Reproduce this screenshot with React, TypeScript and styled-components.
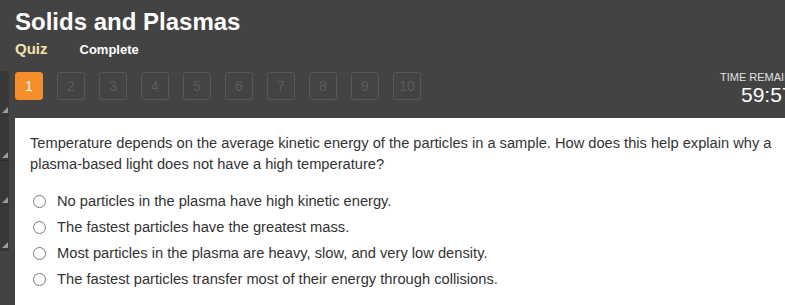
import React from "react";
import styled, { createGlobalStyle } from "styled-components";

const Global = createGlobalStyle`
  html, body { margin: 0; padding: 0; background: #434343; overflow: hidden; }
  body { font-family: "Liberation Sans", Arial, sans-serif; }
`;

const Page = styled.div`
  width: 785px;
  height: 305px;
  background: #434343;
  position: relative;
  overflow: hidden;
`;

const Header = styled.div`
  padding: 8px 0 0 15px;
`;

const Title = styled.h1`
  margin: 0;
  font-size: 24px;
  line-height: 27px;
  font-weight: bold;
  color: #ffffff;
`;

const SubRow = styled.div`
  display: flex;
  align-items: baseline;
  gap: 32px;
  margin-top: 5px;
  height: 22px;
`;

const Quiz = styled.span`
  font-size: 15px;
  font-weight: bold;
  color: #f3e3b0;
`;

const Status = styled.span`
  font-size: 13px;
  font-weight: bold;
  color: #ffffff;
`;

const NavRow = styled.div`
  display: flex;
  align-items: flex-start;
  margin-top: 10px;
  height: 46px;
`;

const Pager = styled.div`
  display: flex;
  gap: 14px;
`;

const PageBtn = styled.div<{ $active?: boolean }>`
  box-sizing: border-box;
  width: 28px;
  height: 28px;
  border-radius: 3px;
  display: flex;
  align-items: center;
  justify-content: center;
  font-size: 14px;
  color: ${(p) => (p.$active ? "#ffffff" : "#5c5c5c")};
  background: ${(p) => (p.$active ? "#f58f2a" : "transparent")};
  border: 1px solid ${(p) => (p.$active ? "#f58f2a" : "#585858")};
`;

const Timer = styled.div`
  margin-left: auto;
  margin-right: -35px;
  width: 100px;
  flex-shrink: 0;
  display: flex;
  flex-direction: column;
  align-items: flex-start;
  color: #ffffff;
`;

const TimerLabel = styled.div`
  font-size: 11px;
  color: #e0e0e0;
  line-height: 12px;
  margin-top: -1px;
  white-space: nowrap;
`;

const TimerValue = styled.div`
  font-size: 21px;
  line-height: 22px;
  margin-top: 1px;
  padding-left: 21px;
  color: #ffffff;
`;

const Panel = styled.div`
  margin-left: 15px;
  background: #ffffff;
  padding: 15px 8px 0 15px;
  height: 200px;
`;

const Question = styled.p`
  margin: 0 0 16px 0;
  font-size: 14.65px;
  line-height: 21px;
  color: #333333;
`;

const Options = styled.div`
  display: flex;
  flex-direction: column;
  gap: 6px;
`;

const Option = styled.label`
  display: flex;
  align-items: center;
  height: 20px;
  font-size: 14.7px;
  color: #333333;
`;

const Radio = styled.span`
  box-sizing: border-box;
  width: 13px;
  height: 13px;
  border-radius: 50%;
  border: 1px solid #7a7a7a;
  background: #fff;
  margin: 0 11px 0 3px;
  flex-shrink: 0;
`;

const SideStrip = styled.div`
  position: absolute;
  left: 0;
  top: 71px;
  width: 9px;
  display: flex;
  flex-direction: column;
`;

const Grip = styled.div`
  position: relative;
  height: 44px;
  background: #383838;
  border-bottom: 1px solid #2e2e2e;
  &::after {
    content: "";
    position: absolute;
    right: 1px;
    bottom: 2px;
    width: 0;
    height: 0;
    border-left: 6px solid transparent;
    border-bottom: 6px solid #9a9a9a;
  }
`;

const options = [
  "No particles in the plasma have high kinetic energy.",
  "The fastest particles have the greatest mass.",
  "Most particles in the plasma are heavy, slow, and very low density.",
  "The fastest particles transfer most of their energy through collisions.",
];

export default function App() {
  return (
    <Page>
      <Global />
      <SideStrip>
        <Grip />
        <Grip />
        <Grip />
        <Grip />
      </SideStrip>
      <Header>
        <Title>Solids and Plasmas</Title>
        <SubRow>
          <Quiz>Quiz</Quiz>
          <Status>Complete</Status>
        </SubRow>
        <NavRow>
          <Pager>
            {Array.from({ length: 10 }, (_, i) => (
              <PageBtn key={i} $active={i === 0}>
                {i + 1}
              </PageBtn>
            ))}
          </Pager>
          <Timer>
            <TimerLabel>TIME REMAINING</TimerLabel>
            <TimerValue>59:57</TimerValue>
          </Timer>
        </NavRow>
      </Header>
      <Panel>
        <Question>
          Temperature depends on the average kinetic energy of the particles in a sample. How does this help explain why a
          plasma-based light does not have a high temperature?
        </Question>
        <Options>
          {options.map((o) => (
            <Option key={o}>
              <Radio />
              {o}
            </Option>
          ))}
        </Options>
      </Panel>
    </Page>
  );
}
